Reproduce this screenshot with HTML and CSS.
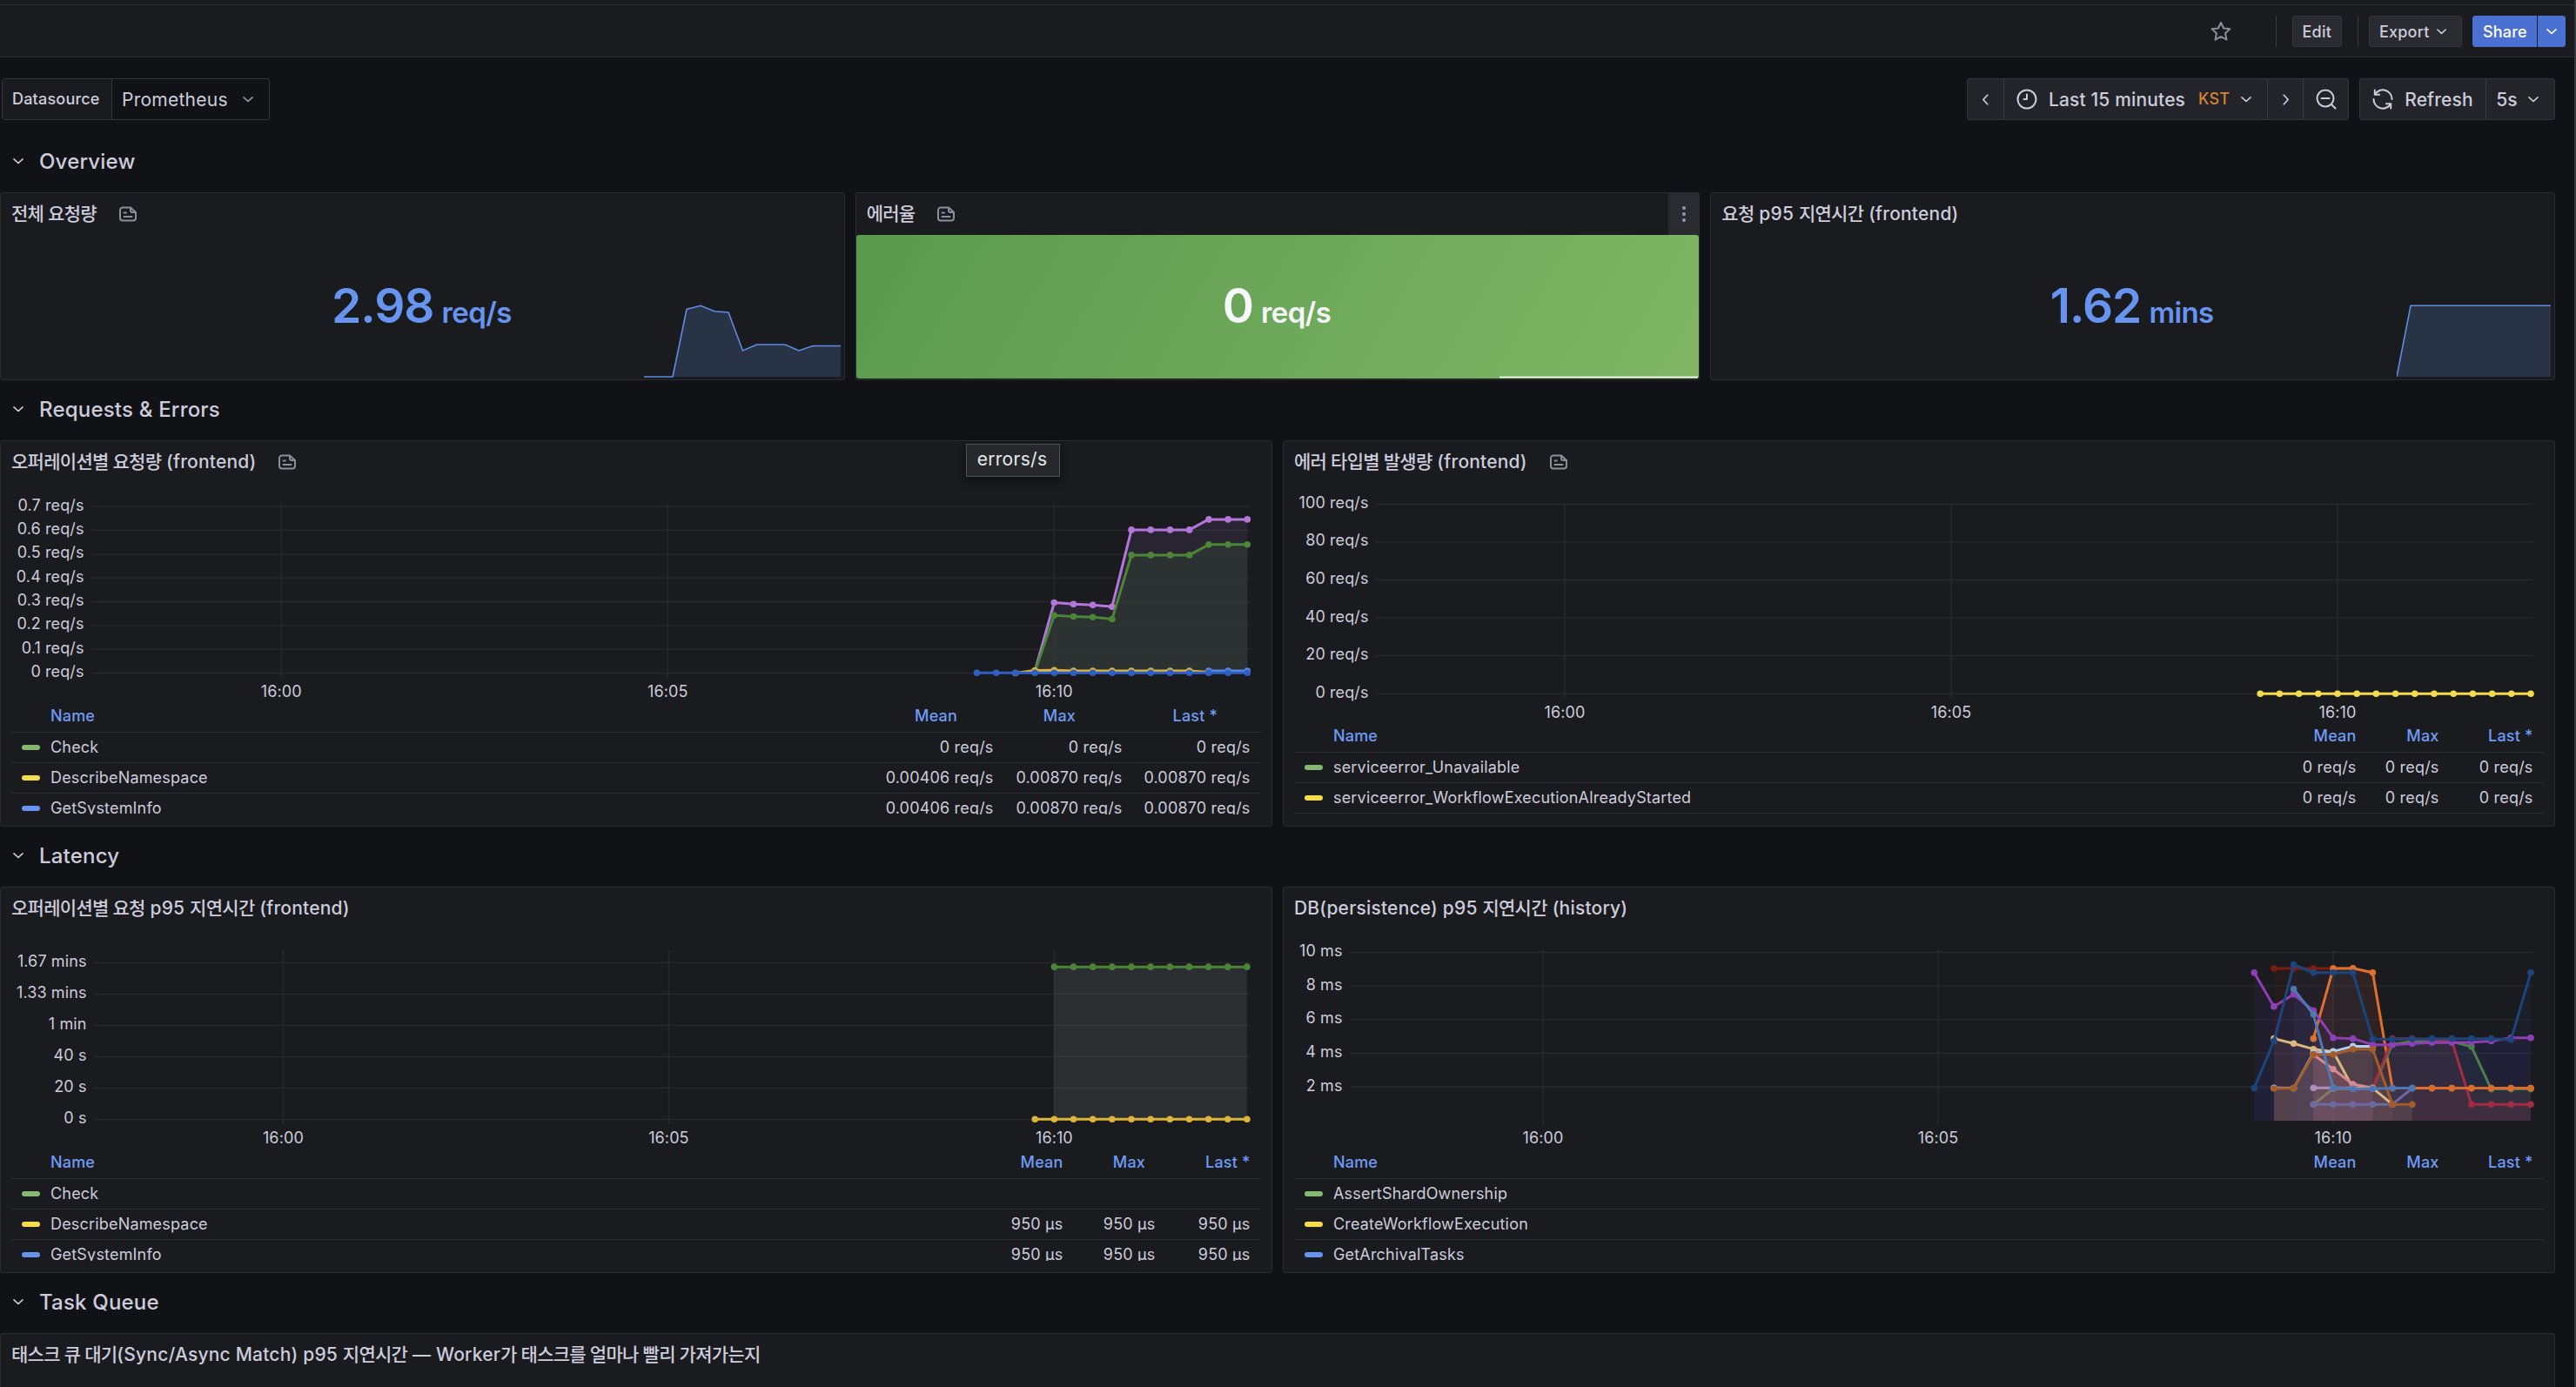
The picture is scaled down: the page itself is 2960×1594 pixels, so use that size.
FILE: index.html
```html
<!DOCTYPE html>
<html lang="ko">
<head>
    <meta charset="UTF-8">
    <meta name="viewport" content="width=device-width, initial-scale=1.0">
    <title>Temporal Server - Dashboards</title>
    <link rel="stylesheet" href="styles.css">
</head>
<body>
    <!-- shared icons -->
    <svg class="sprite">
        <symbol id="i-down" viewBox="0 0 24 24"><path d="M6 9.5l6 5.5 6-5.5"/></symbol>
        <symbol id="i-left" viewBox="0 0 24 24"><path d="M14.5 6l-5.5 6 5.5 6"/></symbol>
        <symbol id="i-right" viewBox="0 0 24 24"><path d="M9.5 6l5.5 6-5.5 6"/></symbol>
        <symbol id="i-note" viewBox="0 0 24 24"><path d="M15 4.500H6a3 3 0 0 0-3 3v9a3 3 0 0 0 3 3h12a3 3 0 0 0 3-3v-6.500zM15 4.500v3.500a2 2 0 0 0 2 2h4M7.500 10.500h2.500M7.500 15h9"/></symbol>
    </svg>

    <header class="topbar">
        <svg class="icon star" viewBox="0 0 24 24"><path d="M12 1.800l3.100 6.700 7.300.8-5.400 5 1.500 7.300L12 18l-6.500 3.600L7 14.300l-5.400-5 7.300-.8z"/></svg>
        <span class="divider"></span>
        <button class="btn">Edit</button>
        <span class="divider divider-2"></span>
        <button class="btn export">Export <svg class="icon chev"><use href="#i-down"/></svg></button>
        <div class="share">
            <button class="btn primary">Share</button>
            <button class="btn primary more"><svg class="icon chev"><use href="#i-down"/></svg></button>
        </div>
    </header>

    <main>
        <div class="controls">
            <div class="variable">
                <label>Datasource</label>
                <div class="select">Prometheus <svg class="icon chev"><use href="#i-down"/></svg></div>
            </div>
            <div class="time-tools">
                <div class="group">
                    <span class="cell arrow"><svg class="icon"><use href="#i-left"/></svg></span>
                    <span class="cell range">
                        <svg class="icon" viewBox="0 0 24 24"><circle cx="12" cy="12" r="10.500"/><path d="M12 6.500V12H8.500"/></svg>
                        <b>Last 15 minutes</b>
                        <em>KST</em>
                        <svg class="icon chev"><use href="#i-down"/></svg>
                    </span>
                    <span class="cell arrow"><svg class="icon"><use href="#i-right"/></svg></span>
                    <span class="cell zoom"><svg class="icon" viewBox="0 0 24 24"><circle cx="11" cy="11" r="9.500"/><path d="M6.500 11h9M18 18l4.500 4.500"/></svg></span>
                </div>
                <div class="group">
                    <span class="cell refresh">
                        <svg class="icon" viewBox="0 0 24 24"><path d="M2.800 1.500v5.300h5.300M2.800 6.800A10.500 10.500 0 0 1 22.500 12M1.500 12a10.500 10.500 0 0 0 19.700 5.200M15.900 17.200h5.300v5.300"/></svg>
                        Refresh
                    </span>
                    <span class="cell interval">5s <svg class="icon chev"><use href="#i-down"/></svg></span>
                </div>
            </div>
        </div>

        <h2 class="row-title"><svg class="icon chev"><use href="#i-down"/></svg>Overview</h2>
        <section class="grid three">
            <article class="panel stat">
                <h3><span><i>전체 요청량</i></span><svg class="icon note"><use href="#i-note"/></svg></h3>
                <div class="value">2.98<small>req/s</small></div>
                <svg class="spark" width="230" height="90">
                    <path class="fill" d="M33 87L49 9.500 65 5.300 81 11.700 97 13 113.500 57 129.500 50H162L178 57 194 51.500H226V87z"/>
                    <path class="line" d="M0 87H33L49 9.500 65 5.300 81 11.700 97 13 113.500 57 129.500 50H162L178 57 194 51.500H226"/>
                </svg>
            </article>
            <article class="panel stat green">
                <h3><span><i>에러율</i></span><svg class="icon note"><use href="#i-note"/></svg>
                    <div class="menu"><b></b><b></b><b></b></div>
                </h3>
                <div class="value">0<small>req/s</small></div>
                <svg class="spark" width="230" height="90"><path class="line" d="M1 87.500H229"/></svg>
            </article>
            <article class="panel stat">
                <h3><span><i>요청</i> p95 <i>지연시간</i> (frontend)</span></h3>
                <div class="value">1.62<small>mins</small></div>
                <svg class="spark" width="181" height="90">
                    <path class="fill" d="M0 87L16 5.300H177V87z"/>
                    <path class="line" d="M0 87L16 5.300H177"/>
                </svg>
            </article>
        </section>

        <h2 class="row-title"><svg class="icon chev"><use href="#i-down"/></svg>Requests &amp; Errors</h2>
        <section class="grid two">
            <article class="panel">
                <h3><span><i>오퍼레이션별 요청량</i> (frontend)</span><svg class="icon note"><use href="#i-note"/></svg></h3>
                <svg class="chart" id="requests"></svg>
                <div class="legend wide">
                    <div class="head"><span>Name</span><span>Mean</span><span>Max</span><span>Last *</span></div>
                    <div class="item c-green"><span>Check</span><span>0 req/s</span><span>0 req/s</span><span>0 req/s</span></div>
                    <div class="item c-yellow"><span>DescribeNamespace</span><span>0.00406 req/s</span><span>0.00870 req/s</span><span>0.00870 req/s</span></div>
                    <div class="item c-blue"><span>GetSystemInfo</span><span>0.00406 req/s</span><span>0.00870 req/s</span><span>0.00870 req/s</span></div>
                </div>
                <div class="tooltip">errors/s</div>
            </article>
            <article class="panel">
                <h3><span><i>에러 타입별 발생량</i> (frontend)</span><svg class="icon note"><use href="#i-note"/></svg></h3>
                <svg class="chart" id="errors"></svg>
                <div class="legend short">
                    <div class="head"><span>Name</span><span>Mean</span><span>Max</span><span>Last *</span></div>
                    <div class="item c-green"><span>serviceerror_Unavailable</span><span>0 req/s</span><span>0 req/s</span><span>0 req/s</span></div>
                    <div class="item c-yellow"><span>serviceerror_WorkflowExecutionAlreadyStarted</span><span>0 req/s</span><span>0 req/s</span><span>0 req/s</span></div>
                </div>
            </article>
        </section>

        <h2 class="row-title"><svg class="icon chev"><use href="#i-down"/></svg>Latency</h2>
        <section class="grid two">
            <article class="panel">
                <h3><span><i>오퍼레이션별 요청</i> p95 <i>지연시간</i> (frontend)</span></h3>
                <svg class="chart" id="latency"></svg>
                <div class="legend mid">
                    <div class="head"><span>Name</span><span>Mean</span><span>Max</span><span>Last *</span></div>
                    <div class="item c-green"><span>Check</span><span></span><span></span><span></span></div>
                    <div class="item c-yellow"><span>DescribeNamespace</span><span>950 µs</span><span>950 µs</span><span>950 µs</span></div>
                    <div class="item c-blue"><span>GetSystemInfo</span><span>950 µs</span><span>950 µs</span><span>950 µs</span></div>
                </div>
            </article>
            <article class="panel">
                <h3><span>DB(persistence) p95 <i>지연시간</i> (history)</span></h3>
                <svg class="chart" id="persistence"></svg>
                <div class="legend">
                    <div class="head"><span>Name</span><span>Mean</span><span>Max</span><span>Last *</span></div>
                    <div class="item c-green"><span>AssertShardOwnership</span></div>
                    <div class="item c-yellow"><span>CreateWorkflowExecution</span></div>
                    <div class="item c-blue"><span>GetArchivalTasks</span></div>
                </div>
            </article>
        </section>

        <h2 class="row-title"><svg class="icon chev"><use href="#i-down"/></svg>Task Queue</h2>
        <section class="grid">
            <article class="panel last">
                <h3><span><i>태스크 큐 대기</i>(Sync/Async Match) p95 <i>지연시간</i> — Worker<i>가 태스크를 얼마나 빨리 가져가는지</i></span></h3>
            </article>
        </section>
    </main>
    <div class="scrollbar"></div>

    <script src="charts.js"></script>
</body>
</html>
```

FILE: styles.css
```css
* {
    box-sizing: border-box;
}

body {
    margin: 0;
    height: 1594px;
    overflow: hidden;
    position: relative;
    background: #111216;
    color: #ccccdc;
    font-family: Inter, "Noto Sans CJK KR", sans-serif;
    font-size: 21px;
}

h2, h3 {
    margin: 0;
    font-weight: 500;
}

.sprite {
    display: none;
}

.icon {
    width: 24px;
    height: 24px;
    flex: none;
    fill: none;
    stroke: currentColor;
    stroke-width: 2;
    stroke-linecap: round;
    stroke-linejoin: round;
}

.chev {
    width: 20px;
    height: 20px;
}

/* top bar */
.topbar {
    height: 66px;
    padding: 18px 12px 11px 0;
    border-bottom: 1px solid #2d2e32;
    background: linear-gradient(#1a1b1f 5px, #2d2e32 5px, #2d2e32 6px, #1a1b1f 6px);
    display: flex;
    align-items: center;
    justify-content: flex-end;
}

.star {
    color: #8e8e99;
    margin-right: 51px;
}

.divider {
    width: 1px;
    height: 36px;
    margin-right: 18px;
    background: #3a3b40;
}

.divider-2 {
    margin: 0 12px 0 18px;
}

.btn {
    height: 36px;
    padding: 0 11px;
    border: 1px solid #35363b;
    border-radius: 3px;
    background: #2a2b30;
    color: #ccccdc;
    font: 550 18px Inter, sans-serif;
    letter-spacing: 0.2px;
    display: flex;
    align-items: center;
}

.export {
    width: 107px;
    gap: 5px;
}

.export .chev {
    width: 19px;
}

.share {
    display: flex;
    gap: 1px;
    margin-left: 12px;
}

.primary {
    background: #4a70d2;
    border-color: #4a70d2;
    color: #fff;
    width: 74px;
    border-radius: 3px 0 0 3px;
}

.more {
    width: 32px;
    padding: 0;
    justify-content: center;
    border-radius: 0 3px 3px 0;
}

/* variables and time range */
main {
    width: 2936px;
    padding-top: 24px;
}

.controls {
    display: flex;
    justify-content: space-between;
    height: 48px;
    margin-bottom: 26px;
}

.variable {
    display: flex;
    width: 308px;
    margin-left: 2px;
    border: 1px solid #34353a;
    border-radius: 3px;
}

.variable label {
    width: 126px;
    padding-left: 11px;
    background: #1a1b1f;
    border-right: 1px solid #34353a;
    font-size: 18px;
    font-weight: 550;
    line-height: 45px;
    letter-spacing: 0.2px;
}

.select {
    flex: 1;
    display: flex;
    align-items: center;
    justify-content: space-between;
    padding: 0 14px 0 11px;
    letter-spacing: 0.25px;
}

.select .chev {
    color: #9a9aa6;
}

.time-tools, .group, .cell {
    display: flex;
    align-items: center;
}

.time-tools {
    gap: 12px;
}

.group {
    height: 48px;
    border: 1px solid #34353a;
    border-radius: 3px;
    background: #232429;
    font-weight: 550;
}

.cell {
    height: 46px;
    justify-content: center;
    letter-spacing: 0.15px;
}

.cell + .cell {
    border-left: 1px solid #3b3c41;
}

.cell b {
    font-weight: 550;
    margin-left: 13px;
}

.cell em {
    font: 500 18px Inter, sans-serif;
    color: #d9822f;
    margin: 0 9px 2px 15px;
}

.arrow {
    width: 41px;
}

.arrow .icon {
    width: 21px;
    height: 21px;
}

.range {
    width: 303px;
}

.zoom {
    width: 52px;
}

.refresh {
    width: 144px;
    gap: 13px;
}

.interval {
    width: 79px;
    gap: 8px;
    padding-right: 3px;
}

/* rows and panels */
.row-title {
    height: 45px;
    margin-bottom: 12px;
    display: flex;
    align-items: center;
    gap: 14px;
    padding: 0 0 3px 11px;
    font-size: 24px;
    font-weight: 550;
    letter-spacing: 0.2px;
}

.grid {
    display: grid;
    gap: 12px;
}

.grid + .row-title {
    margin-top: 12px;
}

.three {
    grid-template-columns: repeat(3, 1fr);
}

.two {
    grid-template-columns: repeat(2, 1fr);
}

.panel {
    position: relative;
    height: 444px;
    border: 1px solid #2c2d32;
    border-radius: 3px;
    background: #1a1b1f;
    display: flex;
    flex-direction: column;
}

.panel.last {
    height: 62px;
    border-bottom: 0;
    border-radius: 3px 3px 0 0;
}

.panel h3 {
    flex: none;
    height: 48px;
    display: flex;
    align-items: center;
    padding-left: 12px;
    font-size: 21px;
    font-weight: 550;
    letter-spacing: 0.2px;
}

.panel h3 span {
    margin-bottom: 4px;
}

/* hangul runs are set a little tighter */
.panel h3 i {
    font-style: normal;
    letter-spacing: -0.72px;
}

.note {
    margin-left: 24px;
    color: #8e8e99;
}

.menu {
    width: 35px;
    height: 48px;
    margin-left: auto;
    background: #2a2b30;
    display: flex;
    flex-direction: column;
    align-items: center;
    justify-content: center;
    gap: 3px;
}

.menu b {
    width: 4px;
    height: 4px;
    border-radius: 50%;
    background: #9a9aa6;
}

.stat {
    height: 216px;
}

.value {
    flex: 1;
    display: flex;
    align-items: baseline;
    justify-content: center;
    gap: 9px;
    padding: 48px 2px 0 0;
    font-size: 55px;
    font-weight: 600;
    line-height: 66px;
    letter-spacing: -1px;
    color: #6794ee;
}

.value small {
    font-size: 33px;
    letter-spacing: -0.6px;
}

.green .value {
    margin-bottom: 1px;
    border-radius: 3px;
    background: linear-gradient(120deg, #5a994e, #80b665);
    color: #f7f8fa;
}

.spark {
    position: absolute;
    right: 0;
    bottom: 0;
}

.spark .fill {
    fill: #283346;
}

.spark .line {
    fill: none;
    stroke: #5f8ce4;
    stroke-width: 1.6;
}

.green .line {
    stroke: #e4f0dd;
    stroke-width: 2;
}

.tooltip {
    position: absolute;
    left: 1109px;
    top: 3px;
    width: 108px;
    height: 38px;
    padding-right: 2px;
    border: 1px solid #4f5154;
    background: #26282b;
    box-shadow: 0 4px 12px rgba(0, 0, 0, 0.45);
    color: #e8e8ea;
    line-height: 34px;
    letter-spacing: 0.3px;
    text-align: center;
}

/* charts */
.chart {
    flex: 1;
    min-height: 0;
    width: 100%;
}

.chart text {
    fill: #ccccdc;
    font-size: 18px;
    letter-spacing: 0.1px;
}

.chart .gridline {
    stroke: #2a2b2f;
    stroke-width: 1.3;
}

/* legends */
.legend {
    --cols: 1fr 100px 95px 108px;
    flex: none;
    height: 129px;
    margin: 0 12px 13px;
    overflow: hidden;
    font-size: 18px;
    letter-spacing: 0.18px;
}

.legend.wide {
    --cols: 1fr 148px 148px 147px;
}

.legend.mid {
    --cols: 1fr 106px 106px 109px;
}

.legend.short {
    height: 106px;
}

.head, .item {
    display: grid;
    grid-template-columns: var(--cols);
    height: 35px;
    line-height: 33px;
    border-bottom: 1px solid #2d2e32;
}

.head {
    color: #6f9bf5;
    font-weight: 550;
    line-height: 32px;
}

.legend span {
    padding-right: 12.5px;
    text-align: right;
    white-space: nowrap;
}

.legend span:first-child {
    text-align: left;
    padding-left: 45px;
}

.wide .head span:nth-child(2) { padding-right: 54px; }
.wide .head span:nth-child(3) { padding-right: 66px; }
.wide .head span:nth-child(4) { padding-right: 50px; }
.mid .head span:nth-child(3) { padding-right: 24px; }

.item span:first-child::before {
    content: "";
    display: inline-block;
    width: 21px;
    height: 6px;
    margin: 0 12px 3px -33px;
    border-radius: 3px;
    background: var(--color);
    vertical-align: middle;
}

.c-green { --color: #84b96f; }
.c-yellow { --color: #f5dc4c; }
.c-blue { --color: #6794ee; }

.scrollbar {
    position: absolute;
    top: 0;
    right: 0;
    width: 2px;
    height: 100%;
    background: #36373c;
}
```

FILE: charts.js
```js
const NS = 'http://www.w3.org/2000/svg';

function add(svg, tag, attrs, text) {
    const node = document.createElementNS(NS, tag);
    for (const key in attrs) node.setAttribute(key, attrs[key]);
    if (text) node.textContent = text;
    svg.appendChild(node);
}

// y labels are listed from the bottom up, one per `step` pixels
function drawChart(id, c) {
    const svg = document.getElementById(id);
    c.labels.forEach((label, i) => {
        if (!label) return;
        const y = c.base - i * c.step;
        add(svg, 'line', { class: 'gridline', x1: c.left, x2: 1436, y1: y, y2: y });
        add(svg, 'text', { x: c.left - 8.5, y: y + 4.5, 'text-anchor': 'end' }, label);
    });
    ['16:00', '16:05', '16:10'].forEach((label, i) => {
        const x = c.lastTick - (2 - i) * c.tick;
        add(svg, 'line', { class: 'gridline', x1: x, x2: x, y1: 24, y2: c.bottom });
        add(svg, 'text', { x: x, y: c.bottom + 21.5, 'text-anchor': 'middle' }, label);
    });

    const px = i => c.lastTick + (i - c.tickIndex) * c.tick / 20;
    const py = v => c.base - v * c.step / c.unit;
    const points = s => s.values.map((v, i) => [px(s.from + i), py(v)]);

    // areas go below every line
    c.series.filter(s => s.fill).forEach(s => {
        const pts = points(s);
        const area = [[pts[0][0], c.base], ...pts, [pts[pts.length - 1][0], c.base]];
        add(svg, 'polygon', { points: area.join(' '), fill: s.fill, 'fill-opacity': s.alpha || 0.1 });
    });
    c.series.forEach(s => {
        const pts = points(s);
        add(svg, 'polyline', { points: pts.join(' '), fill: 'none', stroke: s.color, 'stroke-width': 3, 'stroke-linejoin': 'round' });
        pts.forEach(p => add(svg, 'circle', { cx: p[0], cy: p[1], r: 3.8, fill: s.color }));
    });
}

const fill = (n, v) => Array(n).fill(v);

drawChart('requests', {
    labels: ['0 req/s', '0.1 req/s', '0.2 req/s', '0.3 req/s', '0.4 req/s', '0.5 req/s', '0.6 req/s', '0.7 req/s'],
    left: 104, base: 218.5, step: 27.34, unit: 0.1, bottom: 224,
    lastTick: 1210.3, tick: 444, tickIndex: 4,
    series: [
        { color: '#b377d9', fill: '#b377d9', from: 3, values: [0.008, 0.296, 0.29, 0.286, 0.279, ...fill(4, 0.602), ...fill(3, 0.646)] },
        { color: '#4b8637', fill: '#2e3732', alpha: 0.7, from: 3, values: [0.004, 0.242, 0.238, 0.235, 0.227, ...fill(4, 0.496), ...fill(3, 0.54)] },
        { color: '#dcb53c', from: 2, values: [0, 0.011, 0.012, ...fill(7, 0.009), 0.004] },
        { color: '#5b8be0', from: 12, values: fill(3, 0.009) },
        { color: '#2f5fc4', from: 0, values: fill(15, 0.001) }
    ]
});

drawChart('errors', {
    labels: ['0 req/s', '20 req/s', '40 req/s', '60 req/s', '80 req/s', '100 req/s'],
    left: 106, base: 242.3, step: 43.6, unit: 20, bottom: 248,
    lastTick: 1211, tick: 444, tickIndex: 4,
    series: [{ color: '#f5dc4c', from: 0, values: fill(15, 0) }]
});

drawChart('latency', {
    labels: ['0 s', '20 s', '40 s', '1 min', '1.33 mins', '1.67 mins'],
    left: 107, base: 218.3, step: 36, unit: 20, bottom: 224,
    lastTick: 1210.4, tick: 443, tickIndex: 4,
    series: [
        { color: '#4b8637', fill: '#808a88', alpha: 0.18, from: 4, values: fill(11, 97.3) },
        { color: '#dcb53c', from: 3, values: fill(12, 0) }
    ]
});

drawChart('persistence', {
    labels: ['', '2 ms', '4 ms', '6 ms', '8 ms', '10 ms'],
    left: 76, base: 220, step: 38.74, unit: 2, bottom: 224,
    lastTick: 1206, tick: 454, tickIndex: 4,
    series: [
        { color: '#7c1d12', fill: '#7c1d12', from: 1, values: fill(4, 9.03) },
        { color: '#e0702f', fill: '#e0702f', from: 3, values: [4.87, 9.03, 9.05, 8.79, ...fill(8, 1.93)] },
        { color: '#7f7c62', from: 3, values: [0.97, 1.9, 1.9, 1.9] },
        { color: '#4d7f4d', fill: '#4d7f6d', from: 6, values: [1.93, 4.55, 4.7, 4.75, 4.7, 4.4, 1.88, 1.88, 1.88] },
        { color: '#a32c42', fill: '#a32c42', alpha: 0.15, from: 6, values: [1.93, 4.87, 4.87, 4.8, 4.75, ...fill(4, 0.97)] },
        { color: '#dcb67f', fill: '#dc967f', from: 1, values: [4.87, 4.58, 4.25, 4.1, 1.95, 1.93, 0.97] },
        { color: '#d8898f', fill: '#d8697f', alpha: 0.22, from: 3, values: [3.92, 3.06, 2.17, 1.95] },
        { color: '#b4cdf2', fill: '#b4adc2', from: 1, values: [1.95, 1.93, 4.02, 4.11, 4.42, 4.42] },
        { color: '#b08fc0', from: 3, values: [1.95, 1.95, 1.93] },
        { color: '#8f3fb5', fill: '#5a2fb5', from: 0, values: [8.79, 6.78, 7.5, 6.54, 4.92, 4.87, 4.51, 4.51, 4.58, 4.63, 4.63, 4.66, 4.72, 4.92, 4.92] },
        { color: '#6b6ba4', from: 3, values: [0.97, 0.97, 0.97, 0.97, 0.97, 1.93] },
        { color: '#a45c29', fill: '#c48059', alpha: 0.18, from: 1, values: [1.91, 1.93, 3.95, 3.94, 4.25, 4.25, 0.97, 0.97] },
        { color: '#4d78b4', fill: '#4d78b4', alpha: 0.08, from: 2, values: [7.81, 6.31, 1.95, 1.9, 1.9, 1.93, 1.93] },
        { color: '#1d457c', fill: '#1d457c', alpha: 0.12, from: 0, values: [1.93, 4.73, 9.26, 8.79, 8.79, 8.79, 4.85, 4.83, 4.85, 4.87, 4.87, 4.87, 4.87, 4.81, 8.79] },
        { color: '#d96b2d', from: 9, values: fill(6, 1.93) }
    ]
});
```
